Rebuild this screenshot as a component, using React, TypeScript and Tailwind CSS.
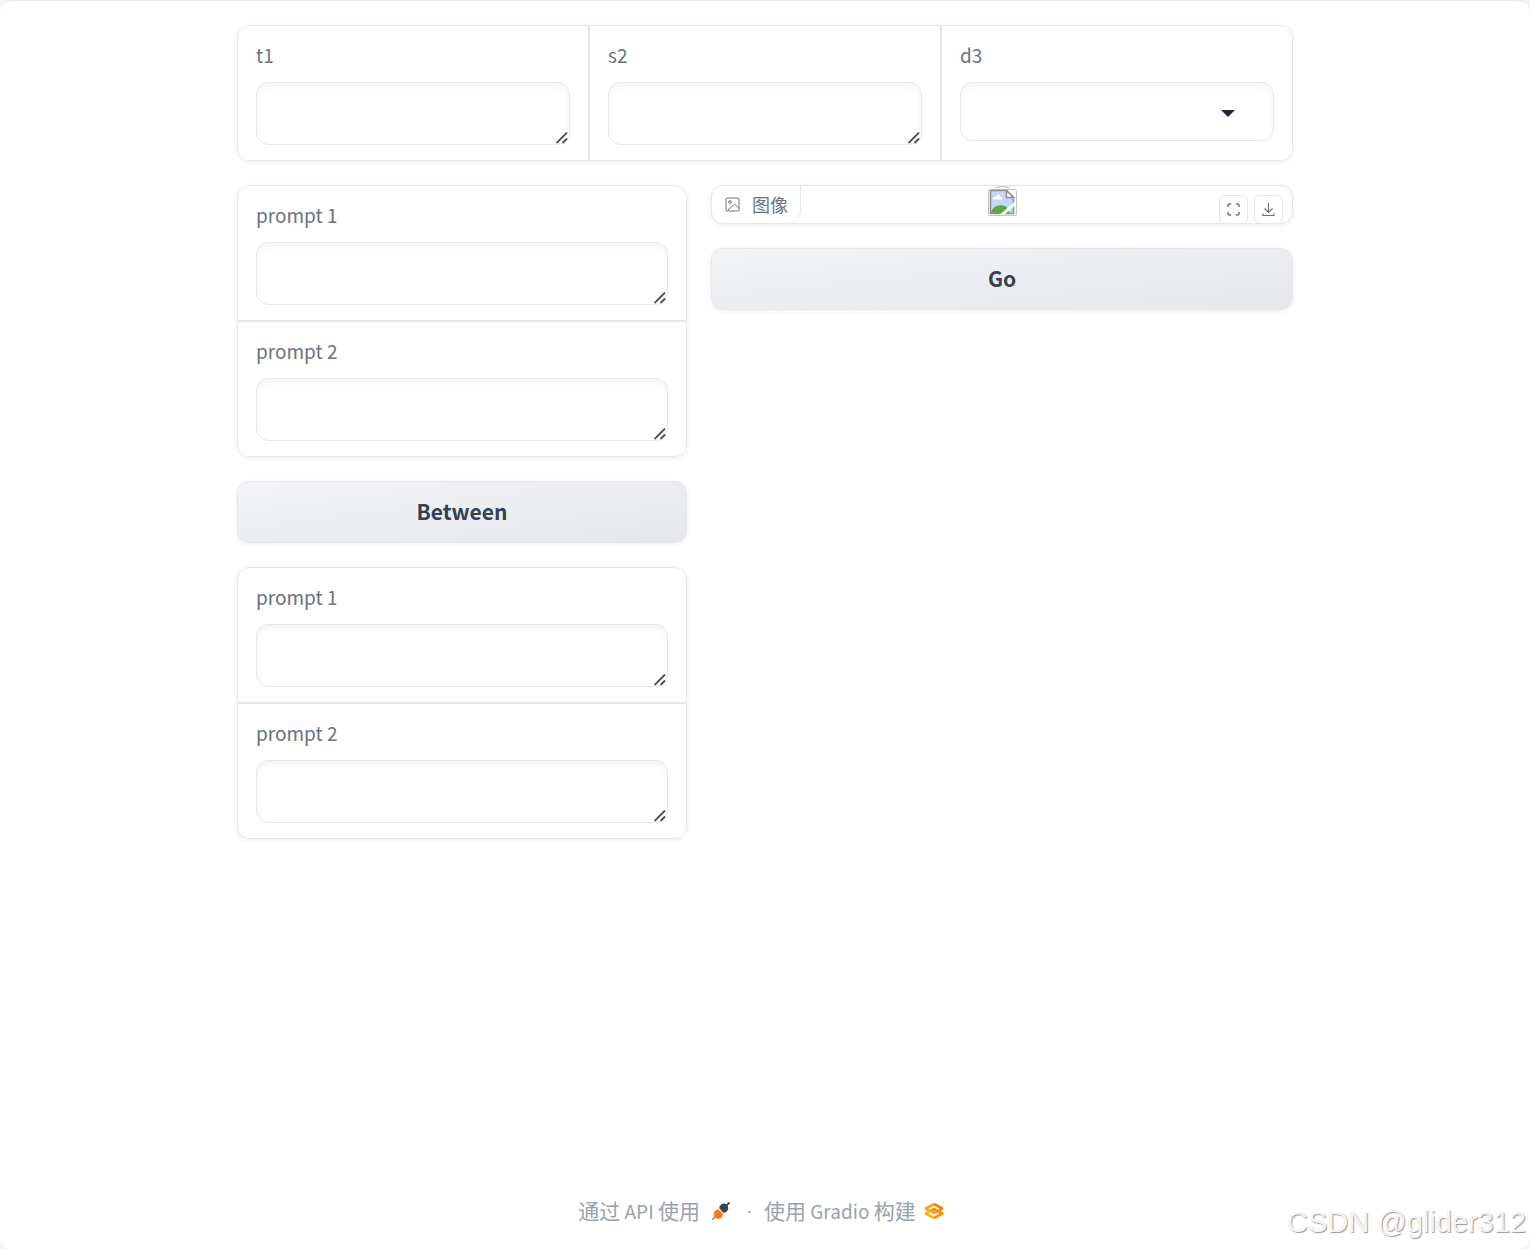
import { FC, ReactNode } from 'react';

interface FieldProps {
  id: string;
  label: string;
  className?: string;
  children?: ReactNode;
}

const Field: FC<FieldProps> = ({ id, label, className = '', children }) => (
  <div className={`min-w-0 flex-1 border border-gray-200 bg-white px-[18px] pt-[18px] pb-[15px] ${className}`}>
    <label htmlFor={id} className="mb-4 block text-[19px] leading-[22px] text-gray-500">
      {label}
    </label>
    {children ?? (
      <div className="relative">
        <textarea
          id={id}
          rows={1}
          className="block h-[63px] w-full resize-none rounded-xl border border-gray-200 bg-white p-4 text-[19px] leading-7 text-gray-800 shadow-[inset_0_3px_6px_0_rgba(0,0,0,0.05)] outline-none"
        />
        <ResizeGrip />
      </div>
    )}
  </div>
);

const ResizeGrip = () => (
  <svg viewBox="0 0 12 12" className="pointer-events-none absolute right-0.5 bottom-px h-3 w-3" stroke="#505050" strokeWidth="1.8">
    <path d="M.5 11 11 .5M6.5 11 11 6.5" />
  </svg>
);

const PromptGroup: FC<{ name: string }> = ({ name }) => (
  <div className="flex flex-col overflow-hidden rounded-xl shadow-[0_1px_4px_0_rgba(0,0,0,0.08)]">
    <Field id={`${name}-1`} label="prompt 1" className="rounded-t-xl" />
    <Field id={`${name}-2`} label="prompt 2" className="rounded-b-xl" />
  </div>
);

const ActionButton: FC<{ children: ReactNode }> = ({ children }) => (
  <button
    type="button"
    className="h-[62px] w-full cursor-pointer rounded-xl border border-gray-200 bg-linear-to-br from-gray-100 to-gray-200 pb-0.5 text-[21px] leading-8 font-semibold text-gray-700 shadow-[0_1px_4px_0_rgba(0,0,0,0.08)]"
  >
    {children}
  </button>
);

const BrokenImage = () => (
  <svg viewBox="0 0 30 32" className="h-8 w-[30px]" role="img" aria-label="output">
    <path d="M8 1.500q7-2 14 0" fill="none" stroke="#b5b5b5" />
    <rect x="1.500" y="3.500" width="28" height="26" rx="1" fill="#fff" stroke="#c4c4c4" />
    <path d="M3.500 4.500h16l7 7v16h-23z" fill="#c5d6f6" />
    <path d="M6 13c0-2 2-2.500 2.800-2 .7-3 4.200-3 4.700 0 2 0 2.500 2 1.500 2.500H6.500z" fill="#fff" />
    <path d="M4 27c1-8 13-11 18-3v3z" fill="#56ab3c" />
    <path d="M3.500 4.500h16l7 7v16h-23z" fill="none" stroke="#909090" strokeWidth="1.600" />
    <path d="M19.500 4.500v7h7z" fill="#fff" stroke="#909090" strokeWidth="1.500" />
    <path d="M13 28.500 28.500 15v4L17.500 28.500z" fill="#fff" />
  </svg>
);

const PlugIcon = () => (
  <svg viewBox="0 0 20 20" className="h-5 w-[18px]" strokeLinecap="round" strokeWidth="2">
    <path d="M1 19l3-3" stroke="#ff7c18" />
    <path d="M3.500 17C0 13 3 8.500 7 8l2.500 2.500L11 9.500l.5 1-1.500 1.500 1 1 1.500-1.500.5 1L12 14c0 4-5 6.500-8.500 3z" fill="#ff7c18" />
    <path d="M19 1l-3 3" stroke="#3b4158" />
    <path d="M16.500 3c3.500 4 .5 8.500-3.500 9L8 7c0-4 5-7.500 8.500-4z" fill="#3b4158" />
  </svg>
);

const GradioLogo = () => (
  <svg viewBox="0 0 20 18" className="h-[18px] w-5" fill="none" strokeWidth="2.600" strokeLinejoin="round">
    <path d="M10 2 1.800 6.500 10 11l3-1.700" stroke="#ffa412" />
    <path d="M10 2l8.200 4.500-3 1.700" stroke="#f97e0b" />
    <path d="m7 8.700 3-1.700 8.200 4.500L10 16" stroke="#fb8f10" />
    <path d="m4.800 9.800-3 1.700L10 16" stroke="#fbb616" />
  </svg>
);

const iconButton =
  'flex h-[29px] w-[29px] cursor-pointer items-center justify-center rounded-md border border-gray-200 bg-white text-gray-500 shadow-xs';

const App = () => {
  return (
    <div className="bg-gray-100 font-['Noto_Sans_CJK_SC',sans-serif]">
      <div className="relative flex min-h-screen flex-col rounded-xl border-t border-gray-200 bg-white">
        <main className="mx-auto flex w-full max-w-[1104px] flex-1 flex-col gap-6 p-6">
          <div className="flex overflow-hidden rounded-xl shadow-[0_1px_4px_0_rgba(0,0,0,0.08)]">
            <Field id="t1" label="t1" className="rounded-l-xl" />
            <Field id="s2" label="s2" />
            <Field id="d3" label="d3" className="rounded-r-xl">
              <div className="relative">
                <select
                  id="d3"
                  className="block h-[59px] w-full appearance-none rounded-xl border border-gray-200 bg-white px-4 text-[19px] text-gray-800 shadow-[inset_0_3px_6px_0_rgba(0,0,0,0.05)] outline-none"
                />
                <svg viewBox="0 0 14 7" className="pointer-events-none absolute top-7 right-[39px] h-[7px] w-3.5" fill="#1f2937">
                  <path d="M0 0h14L7 7z" />
                </svg>
              </div>
            </Field>
          </div>

          <div className="flex items-start gap-6">
            <div className="flex min-w-0 flex-[450] flex-col gap-6">
              <PromptGroup name="first" />
              <ActionButton>Between</ActionButton>
              <PromptGroup name="last" />
            </div>

            <div className="flex min-w-0 flex-[582] flex-col gap-6">
              {/* Image output */}
              <div className="relative flex h-[39px] justify-center overflow-hidden rounded-xl border border-gray-200 bg-white shadow-[0_1px_4px_0_rgba(0,0,0,0.08)]">
                <div className="absolute top-0 left-0 flex h-[37px] items-center gap-3 rounded-br-xl border-r border-gray-200 pr-3 pl-[13px] text-[18px] text-gray-500">
                  <svg viewBox="0 0 15 15" className="h-[15px] w-[15px]" fill="none" stroke="currentColor">
                    <rect x="1" y="1" width="13" height="13" rx="1" />
                    <circle cx="5" cy="5" r="1.300" />
                    <path d="m3 13 6.500-6L14 11.500" />
                  </svg>
                  图像
                </div>
                <BrokenImage />
                <div className="absolute top-[9px] right-[9px] flex gap-1.5">
                  <button type="button" aria-label="Fullscreen" className={iconButton}>
                    <svg viewBox="0 0 13 13" className="h-[13px] w-[13px]" fill="none" stroke="currentColor" strokeWidth="1.500" strokeLinecap="round">
                      <path d="M1 3.500v-1Q1 1 2.500 1h1M9.500 1h1Q12 1 12 2.500v1M12 9.500v1q0 1.500-1.500 1.500h-1M3.500 12h-1Q1 12 1 10.500v-1" />
                    </svg>
                  </button>
                  <button type="button" aria-label="Download" className={iconButton}>
                    <svg viewBox="0 0 13 13" className="h-[13px] w-[13px]" fill="none" stroke="currentColor" strokeWidth="1.200">
                      <path d="M6.500 0v9.500M2.500 5.500l4 4 4-4M1 10.500v2h11v-2" />
                    </svg>
                  </button>
                </div>
              </div>
              <ActionButton>Go</ActionButton>
            </div>
          </div>
        </main>

        <footer className="flex items-center justify-center pr-2 pb-[22px] text-[21px] leading-8 text-gray-400">
          <a href="#api" className="flex items-center gap-3">
            <span>
              通过<span className="text-[19px]"> API </span>使用
            </span>
            <PlugIcon />
          </a>
          <span className="mr-3 ml-[17px] font-['Open_Sans',sans-serif] text-[19px]">·</span>
          <a href="#gradio" className="flex items-center gap-2">
            <span>
              使用<span className="text-[19px]"> Gradio </span>构建
            </span>
            <GradioLogo />
          </a>
        </footer>

        <div className="absolute right-1 bottom-[7px] font-['Liberation_Sans',sans-serif] text-[29px] leading-10 text-gray-100 [text-shadow:1px_1px_1px_#999]">
          CSDN @glider312
        </div>
      </div>
    </div>
  );
};

export default App;
